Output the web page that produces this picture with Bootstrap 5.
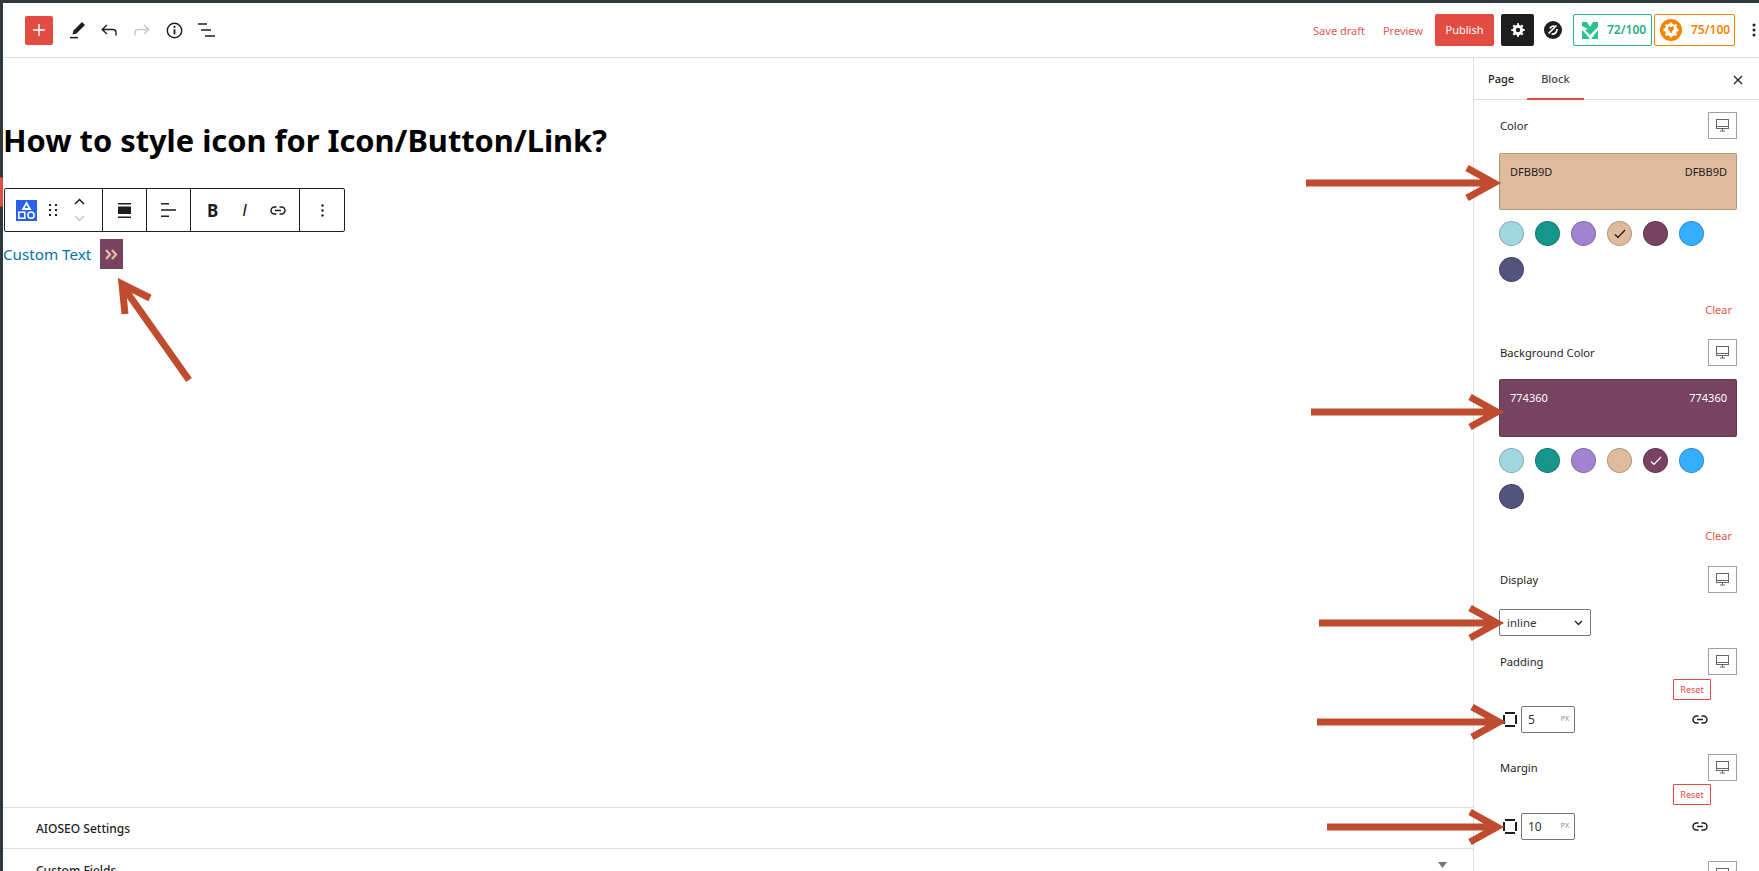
<!DOCTYPE html>
<html lang="en">
<head>
<meta charset="utf-8">
<title>Edit Post</title>
<link href="https://cdn.jsdelivr.net/npm/bootstrap@5.3.0/dist/css/bootstrap.min.css" rel="stylesheet">
<style>
html,body{height:100%;margin:0;overflow:hidden}
body{font-family:"Noto Sans","Open Sans",sans-serif;font-size:11px;color:#1e1e1e;background:#32373c}
.shell{position:relative;width:1759px;height:871px;padding:3px 0 0 3px;overflow:hidden}
.edge-mark{position:absolute;left:0;top:177px;width:3px;height:30px;background:#e34c42;border-radius:0 8px 8px 0}
.frame{height:868px;background:#fff;display:flex;flex-direction:column}
.topbar{height:55px;flex:none;border-bottom:1px solid #ddd;padding:0 0 0 22px;display:flex;align-items:center}
.add-btn{width:28px;height:29px;background:#e34c42;border-radius:2px;border:0;padding:0;display:flex;align-items:center;justify-content:center;margin-right:17px}
.tool-ico{flex:none;display:block}
.ico-pencil{margin-right:15px}
.ico-undo{margin-right:17px}
.ico-redo{margin-right:16px}
.ico-info{margin-right:15px}
.ico-logo{margin-left:10px}
.ico-more{margin-left:17px}
.tb-end{width:3px}
.tb-spacer{flex:1}
.txt-link{color:#e25a52;font-size:11px;text-decoration:none;line-height:1}
.save-link{margin-right:18px}
.publish{background:#e34c42;color:#fff;border:0;border-radius:2px;width:59px;height:32px;font-size:11px;padding:0;margin-left:12px}
.gear-btn{background:#1e1e1e;border:0;border-radius:2px;width:33px;height:32px;padding:0;margin-left:7px;display:flex;align-items:center;justify-content:center}
.score{height:32px;border:1px solid;border-radius:2px;display:flex;align-items:center;font-weight:600;font-size:12px;background:#fff}
.score-g{width:79px;margin-left:11px;border-color:#27b98a;color:#27ae80;padding-left:8px;gap:9px}
.score-o{width:81px;margin-left:2px;border-color:#f18500;color:#f18500;padding-left:5px;gap:9px}
.work{flex:1;display:flex;min-height:0}
.canvas{flex:1;min-width:0;display:flex;flex-direction:column}
.doc{flex:1;min-height:0}
.doc-title{font-size:30.800px;font-weight:700;color:#000;margin:61px 0 0;line-height:42px}
.block-bar{margin:27px 0 0 1px;width:341px;height:44px;border:1px solid #1e1e1e;border-radius:2px;display:flex;background:#fff}
.bar-group{display:flex;align-items:center;border-right:1px solid #1e1e1e;height:100%}
.bar-group:last-child{border-right:0}
.grp-first{width:98px}
.grp-icon{width:44px;justify-content:center}
.grp-format{width:109px}
.grp-more{flex-grow:1;justify-content:center}
.type-ico{width:21px;height:21px;background:#2962e8;margin-left:11px;display:block}
.ico-drag{margin-left:12px}
.ico-updown{margin-left:17px}
.fmt-b{font-weight:700;font-size:17px;margin-left:16px;line-height:1}
.fmt-i{font-style:italic;font-size:17px;margin-left:24px;line-height:1;font-family:"Liberation Sans",sans-serif}
.ico-link{margin-left:23px}
.sample{display:flex;align-items:center;margin-top:7px;height:30px}
.sample a{color:#0073aa;font-size:15.200px;text-decoration:none;line-height:1;padding-top:2px}
.mini-box{width:23px;height:30px;background:#774360;margin-left:9px;display:flex;align-items:center;justify-content:center}
.meta-row{height:41px;flex:none;border-top:1px solid #ddd;padding:2px 26px 0 33px;display:flex;align-items:center;font-size:12px;font-weight:500;color:#1e1e1e;justify-content:space-between}
.meta-last{height:23px;align-items:flex-start;padding-top:13px}
.side{width:286px;flex:none;border-left:1px solid #ddd;overflow:hidden}
.tabs-row{height:42px;border-bottom:1px solid #ddd;display:flex;align-items:center;font-size:11px;font-weight:500;padding-top:2px}
.tab-a{margin-left:14px;color:#1e1e1e}
.tab-b{margin-left:27px;color:#444;position:relative}
.tab-b::after{content:"";position:absolute;left:-14px;right:-14px;bottom:-12px;height:2px;background:#e34c42}
.tab-x{margin-left:auto;margin-right:16px;display:block}
.panel{padding:12px 22px 0 25px;font-size:11.200px}
.lab-row{display:flex;justify-content:space-between;align-items:center;height:27px;color:#1e1e1e}
.lab-row>span:first-child{padding:2px 0 0 1px}
.resp{width:29px;height:27px;border:1px solid #9aa1ad;background:#fff;display:flex;align-items:center;justify-content:center}
.swatch{height:57px;border:1px solid rgba(0,0,0,.2);border-radius:2px;display:flex;justify-content:space-between;padding:10px 9px 9px 10px;margin-top:14px;font-size:11px;line-height:16px}
.sw-tan{background:#dfbb9d;color:#1e1e1e}
.sw-plum{background:#774360;color:#fff;margin-top:13px;height:58px}
.dots{display:flex;flex-wrap:wrap;gap:11px;margin-top:11px;width:216px}
.dot{width:25px;height:25px;border-radius:50%;border:1px solid rgba(0,0,0,.2);display:flex;align-items:center;justify-content:center}
.c-ice{background:#9fd6df}.c-teal{background:#16968a}.c-lilac{background:#a283cf}.c-tan{background:#dfbb9d}.c-plum{background:#774360}.c-sky{background:#36aeff}.c-navy{background:#52547e}
.clear-txt{display:block;text-align:right;color:#e9544a;font-size:11px;margin:20px 5px 0 0;line-height:16px;text-decoration:none}
.sec-bg{margin-top:21px}
.sec-bg .clear-txt{margin-top:19px}
.sec-display{margin-top:22px}
.sec-pad{margin-top:12px}
.sec-mar{margin-top:21px}
.sec-trans{margin-top:21px}
.sel{width:92px;height:27px;border:1px solid #757575;border-radius:2px;margin-top:16px;display:flex;align-items:center;justify-content:space-between;padding:0 7px;font-size:11.500px;color:#2c3338}
.reset-row{display:flex;justify-content:flex-end;padding-right:26px;margin-top:4px}
.sec-mar .reset-row{margin-top:3px}
.reset-b{width:38px;height:21px;border:1px solid #e34c42;border-radius:1px;color:#e34c42;font-size:9px;display:flex;align-items:center;justify-content:center;background:#fff}
.num-row{display:flex;align-items:center;margin-top:6px;height:27px}
.sec-mar .num-row{margin-top:8px}
.ico-box{margin-left:4px}
.num-field{width:54px;height:27px;border:1px solid #757575;border-radius:2px;margin-left:4px;display:flex;justify-content:space-between;align-items:center;padding:0 5px 0 6px;font-size:12px;color:#2c3338}
.unit{font-size:7px;color:#888}
.ico-chain{margin-left:117px}
.overlay{position:absolute;left:0;top:0;pointer-events:none}
</style>
</head>
<body>
<div class="shell">
  <div class="edge-mark"></div>
  <div class="frame">
    <header class="topbar">
      <button class="add-btn" aria-label="Add block"><svg width="14" height="14" viewBox="0 0 14 14"><path d="M7 1v12M1 7h12" stroke="#fff" stroke-width="1.6"/></svg></button>
      <svg class="tool-ico ico-pencil" width="16" height="18" viewBox="0 0 16 18"><path d="M12 1l3 3-8.500 8.500-4 1 1-4z" fill="#1e1e1e"/><path d="M0 16.600h8" stroke="#1e1e1e" stroke-width="1.500"/></svg>
      <svg class="tool-ico ico-undo" width="16" height="12" viewBox="0 0 16 12"><path d="M6 1L1.200 5.500 6 10M1.200 5.500H12c2 0 3 1.200 3 3v3" fill="none" stroke="#1e1e1e" stroke-width="1.400"/></svg>
      <svg class="tool-ico ico-redo" width="16" height="12" viewBox="0 0 16 12"><path d="M10 1l4.800 4.500L10 10M14.800 5.500H4c-2 0-3 1.200-3 3v3" fill="none" stroke="#c8c8c8" stroke-width="1.400"/></svg>
      <svg class="tool-ico ico-info" width="17" height="17" viewBox="0 0 17 17"><circle cx="8.500" cy="8.500" r="7.200" fill="none" stroke="#1e1e1e" stroke-width="1.400"/><path d="M8.500 7.200v5.300" stroke="#1e1e1e" stroke-width="1.800"/><circle cx="8.500" cy="4.900" r="1.100" fill="#1e1e1e"/></svg>
      <svg class="tool-ico" width="17" height="14" viewBox="0 0 17 14"><path d="M0 1h9M3 7h10M7 13h10" stroke="#1e1e1e" stroke-width="1.500"/></svg>
      <div class="tb-spacer"></div>
      <a class="txt-link save-link" href="#">Save draft</a>
      <a class="txt-link" href="#">Preview</a>
      <button class="publish">Publish</button>
      <button class="gear-btn" aria-label="Settings"><svg width="14" height="14" viewBox="0 0 14 14"><circle cx="7" cy="7" r="3.700" fill="none" stroke="#fff" stroke-width="3"/><path d="M7 .3v2.500M7 11.200v2.500M.3 7h2.500M11.200 7h2.500M2.300 2.300l1.700 1.700M10 10l1.700 1.700M11.700 2.300L10 4M4 10l-1.700 1.700" stroke="#fff" stroke-width="2"/></svg></button>
      <svg class="tool-ico ico-logo" width="18" height="18" viewBox="0 0 18 18"><circle cx="9" cy="9" r="9" fill="#1e1e1e"/><path d="M4.500 12.500l8-8M6 7.500C6.500 6 8 5 10.500 5M7.500 13c3 .5 5.500-1.500 5.500-5" stroke="#fff" stroke-width="1.700" fill="none"/></svg>
      <div class="score score-g"><svg width="16" height="17" viewBox="0 0 16 17"><path d="M0 0h5l3 5 3-5h5v5L8 13 3 8l3-1-6-3zM0 8l4 4 4 5H0zM16 8v9H9z" fill="#2ac18f"/></svg><span>72/100</span></div>
      <div class="score score-o"><svg width="22" height="22" viewBox="0 0 22 22"><circle cx="11" cy="11" r="11" fill="#f18500"/><circle cx="11" cy="11" r="6.200" fill="#fff"/><path d="M11 3.500v3M11 15.500v3M3.500 11h3M15.500 11h3M5.700 5.700l2 2M14.300 14.300l2 2M16.300 5.700l-2 2M7.700 14.300l-2 2" stroke="#fff" stroke-width="2.400"/><path d="M8.800 8v-1h1v1h2.400v-1h1v1h.6v2.400l-2 2v1.500h-1.600v-1.500l-2-2V8z" fill="#f18500"/></svg><span>75/100</span></div>
      <svg class="tool-ico ico-more" width="4" height="14" viewBox="0 0 4 14"><circle cx="2" cy="2" r="1.500" fill="#1e1e1e"/><circle cx="2" cy="7" r="1.500" fill="#1e1e1e"/><circle cx="2" cy="12" r="1.500" fill="#1e1e1e"/></svg>
      <div class="tb-end"></div>
    </header>
    <div class="work">
      <main class="canvas">
        <div class="doc">
          <h1 class="doc-title">How to style icon for Icon/Button/Link?</h1>
          <div class="block-bar">
            <div class="bar-group grp-first">
              <svg class="type-ico" viewBox="0 0 21 21"><path d="M10.500 3l3.400 6H7.100z" fill="none" stroke="#fff" stroke-width="1.800"/><rect x="2.800" y="12.200" width="6" height="6" fill="none" stroke="#fff" stroke-width="1.500"/><circle cx="15" cy="15.200" r="3.100" fill="none" stroke="#fff" stroke-width="1.500"/></svg>
              <svg class="tool-ico ico-drag" width="8" height="13" viewBox="0 0 8 13"><g fill="#1e1e1e"><rect width="2" height="2" x="0" y="0"/><rect width="2" height="2" x="6" y="0"/><rect width="2" height="2" x="0" y="5"/><rect width="2" height="2" x="6" y="5"/><rect width="2" height="2" x="0" y="10"/><rect width="2" height="2" x="6" y="10"/></g></svg>
              <svg class="tool-ico ico-updown" width="11" height="24" viewBox="0 0 11 24"><path d="M1 6l4.500-4.500L10 6" fill="none" stroke="#1e1e1e" stroke-width="1.500"/><path d="M1 18l4.500 4.500L10 18" fill="none" stroke="#c8c8c8" stroke-width="1.500"/></svg>
            </div>
            <div class="bar-group grp-icon">
              <svg width="13" height="15" viewBox="0 0 13 15"><rect y="0" width="13" height="1.500" fill="#1e1e1e"/><rect y="3.500" width="13" height="7.500" fill="#1e1e1e"/><rect y="13.500" width="13" height="1.500" fill="#1e1e1e"/></svg>
            </div>
            <div class="bar-group grp-icon">
              <svg width="15" height="14" viewBox="0 0 15 14"><path d="M0 .8h8M0 7h15M0 13.200h8" stroke="#1e1e1e" stroke-width="1.400"/></svg>
            </div>
            <div class="bar-group grp-format">
              <span class="fmt-b">B</span>
              <span class="fmt-i">I</span>
              <svg class="ico-link" width="16" height="9" viewBox="0 0 16 9"><path d="M6.500 1H4.500a3.500 3.500 0 000 7h2M9.500 1h2a3.500 3.500 0 010 7h-2M5 4.500h6" fill="none" stroke="#1e1e1e" stroke-width="1.500"/></svg>
            </div>
            <div class="bar-group grp-more">
              <svg width="3" height="13" viewBox="0 0 3 13"><circle cx="1.500" cy="1.500" r="1.200" fill="#1e1e1e"/><circle cx="1.500" cy="6.500" r="1.200" fill="#1e1e1e"/><circle cx="1.500" cy="11.500" r="1.200" fill="#1e1e1e"/></svg>
            </div>
          </div>
          <div class="sample"><a href="#">Custom Text</a><span class="mini-box"><svg width="13" height="11" viewBox="0 0 13 11"><path d="M1 1l4 4.500L1 10M7 1l4 4.500L7 10" fill="none" stroke="#dfbb9d" stroke-width="2.400"/></svg></span></div>
        </div>
        <div class="meta-row">AIOSEO Settings</div>
        <div class="meta-row meta-last"><span>Custom Fields</span><svg width="9" height="6" viewBox="0 0 9 6"><path d="M0 0h9L4.500 6z" fill="#6c7781"/></svg></div>
      </main>
      <aside class="side">
        <div class="tabs-row">
          <span class="tab-a">Page</span><span class="tab-b">Block</span>
          <svg class="tab-x" width="10" height="10" viewBox="0 0 10 10"><path d="M1 1l8 8M9 1l-8 8" stroke="#1e1e1e" stroke-width="1.300"/></svg>
        </div>
        <div class="panel">
          <section>
            <div class="lab-row"><span>Color</span><span class="resp"><svg width="13" height="13" viewBox="0 0 13 13"><rect x=".5" y=".5" width="12" height="9" fill="none" stroke="#666"/><path d="M1 7.500h11M4 12h5M6.500 10v2" stroke="#666"/></svg></span></div>
            <div class="swatch sw-tan"><span>DFBB9D</span><span>DFBB9D</span></div>
            <div class="dots">
              <span class="dot c-ice"></span><span class="dot c-teal"></span><span class="dot c-lilac"></span>
              <span class="dot c-tan"><svg width="12" height="10" viewBox="0 0 12 10"><path d="M1 5.500L4 8.500 11 1" fill="none" stroke="#111" stroke-width="1.200"/></svg></span>
              <span class="dot c-plum"></span><span class="dot c-sky"></span><span class="dot c-navy"></span>
            </div>
            <a class="clear-txt" href="#">Clear</a>
          </section>
          <section class="sec-bg">
            <div class="lab-row"><span>Background Color</span><span class="resp"><svg width="13" height="13" viewBox="0 0 13 13"><rect x=".5" y=".5" width="12" height="9" fill="none" stroke="#666"/><path d="M1 7.500h11M4 12h5M6.500 10v2" stroke="#666"/></svg></span></div>
            <div class="swatch sw-plum"><span>774360</span><span>774360</span></div>
            <div class="dots">
              <span class="dot c-ice"></span><span class="dot c-teal"></span><span class="dot c-lilac"></span><span class="dot c-tan"></span>
              <span class="dot c-plum"><svg width="12" height="10" viewBox="0 0 12 10"><path d="M1 5.500L4 8.500 11 1" fill="none" stroke="#fff" stroke-width="1.200"/></svg></span>
              <span class="dot c-sky"></span><span class="dot c-navy"></span>
            </div>
            <a class="clear-txt" href="#">Clear</a>
          </section>
          <section class="sec-display">
            <div class="lab-row"><span>Display</span><span class="resp"><svg width="13" height="13" viewBox="0 0 13 13"><rect x=".5" y=".5" width="12" height="9" fill="none" stroke="#666"/><path d="M1 7.500h11M4 12h5M6.500 10v2" stroke="#666"/></svg></span></div>
            <div class="sel"><span>inline</span><svg width="9" height="6" viewBox="0 0 9 6"><path d="M1 1l3.500 3.500L8 1" fill="none" stroke="#1e1e1e" stroke-width="1.300"/></svg></div>
          </section>
          <section class="sec-pad">
            <div class="lab-row"><span>Padding</span><span class="resp"><svg width="13" height="13" viewBox="0 0 13 13"><rect x=".5" y=".5" width="12" height="9" fill="none" stroke="#666"/><path d="M1 7.500h11M4 12h5M6.500 10v2" stroke="#666"/></svg></span></div>
            <div class="reset-row"><span class="reset-b">Reset</span></div>
            <div class="num-row">
              <svg class="ico-box" width="14" height="15" viewBox="0 0 14 15"><path d="M2 .9h10M2 14.100h10M1 3v9M13 3v9" stroke="#1e1e1e" stroke-width="2"/></svg>
              <span class="num-field"><span>5</span><span class="unit">PX</span></span>
              <svg class="ico-chain" width="16" height="9" viewBox="0 0 16 9"><path d="M6.500 1H4.500a3.500 3.500 0 000 7h2M9.500 1h2a3.500 3.500 0 010 7h-2M5 4.500h6" fill="none" stroke="#1e1e1e" stroke-width="1.500"/></svg>
            </div>
          </section>
          <section class="sec-mar">
            <div class="lab-row"><span>Margin</span><span class="resp"><svg width="13" height="13" viewBox="0 0 13 13"><rect x=".5" y=".5" width="12" height="9" fill="none" stroke="#666"/><path d="M1 7.500h11M4 12h5M6.500 10v2" stroke="#666"/></svg></span></div>
            <div class="reset-row"><span class="reset-b">Reset</span></div>
            <div class="num-row">
              <svg class="ico-box" width="14" height="15" viewBox="0 0 14 15"><path d="M2 .9h10M2 14.100h10M1 3v9M13 3v9" stroke="#1e1e1e" stroke-width="2"/></svg>
              <span class="num-field"><span>10</span><span class="unit">PX</span></span>
              <svg class="ico-chain" width="16" height="9" viewBox="0 0 16 9"><path d="M6.500 1H4.500a3.500 3.500 0 000 7h2M9.500 1h2a3.500 3.500 0 010 7h-2M5 4.500h6" fill="none" stroke="#1e1e1e" stroke-width="1.500"/></svg>
            </div>
          </section>
          <section class="sec-trans">
            <div class="lab-row"><span>Transform</span><span class="resp"><svg width="13" height="13" viewBox="0 0 13 13"><rect x=".5" y=".5" width="12" height="9" fill="none" stroke="#666"/></svg></span></div>
          </section>
        </div>
      </aside>
    </div>
  </div>
  <svg class="overlay" width="1759" height="871" viewBox="0 0 1759 871" fill="none" stroke="#c04c2f" stroke-width="7" aria-hidden="true">
    <path d="M1306 183H1490M1467 168l27 15-27 15"/>
    <path d="M1311 412H1492M1470 397l27 15-27 15"/>
    <path d="M1319 623H1492M1470 608l27 15-27 15"/>
    <path d="M1317 722H1494M1472 707l27 15-27 15"/>
    <path d="M1327 827H1494M1470 812l27 15-27 15"/>
    <path d="M189 380L124 288M150 298l-28-14 3 30"/>
  </svg>
</div>
</body>
</html>
